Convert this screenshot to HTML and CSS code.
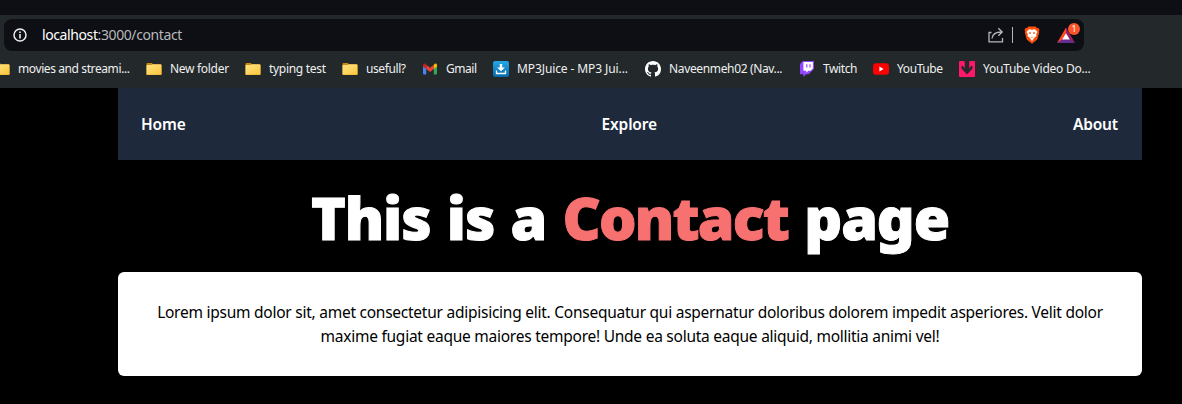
FILE: index.html
```html
<!DOCTYPE html>
<html lang="en">
<head>
<meta charset="utf-8">
<title>Contact</title>
<link rel="stylesheet" href="styles.css">
</head>
<body>
<svg class="defs" width="0" height="0" aria-hidden="true">
  <defs>
    <linearGradient id="fold" x2="1" y2="1"><stop stop-color="#ffe484"/><stop offset="1" stop-color="#fcc63d"/></linearGradient>
    <linearGradient id="blue" x2="0" y2="1"><stop stop-color="#25a9e6"/><stop offset="1" stop-color="#0768ae"/></linearGradient>
    <symbol id="folder" viewBox="0 0 16 16"><path d="M.5 3q0-1 1-1H6l1 1.400h7.500q1 0 1 1V14H.5z" fill="#c98b0d"/><path d="M.5 4.500Q.5 4 1 4h4.500l1.300-.7h7.700q1 0 1 1v8.500q0 .9-.9.900H1.400q-.9 0-.9-.9z" fill="url(#fold)"/></symbol>
  </defs>
</svg>
<header class="browser">
  <div class="tabstrip"></div>
  <div class="address">
    <svg class="info" viewBox="0 0 14 14"><circle cx="7" cy="7" r="6" fill="none" stroke="#eee" stroke-width="1.500"/><path d="M6.200 3.500h1.600V5H6.200zM6.200 6h1.600v4.500H6.200z" fill="#eee"/></svg>
    <div class="url"><span class="host">localhost</span>:3000/contact</div>
    <svg class="share" viewBox="0 0 16 16" fill="none" stroke="#b5b7bb" stroke-width="1.300"><path d="M3.500 5.500H1v9.300h13.500V11M4 11.500C4.500 7 7.500 5 13.500 5M10.300 1.300 14.200 5l-3.900 3.800"/></svg>
    <span class="divider"></span>
    <svg class="brave" viewBox="0 0 16 18"><path d="M4.500.5h7L13 2l1.300-.1L15.500 4l-.6 1.500.3 1-2 7L8 17.700l-5.200-4.200-2-7 .3-1L.5 4l1.200-2.100L3 2z" fill="#fb4f0b"/><path d="M5 3.200l3 .6 3-.6 2.400 2.900-1.300 2.400.3 1.500-2.200 1.700L8 15.200l-2.200-3.500L3.600 10l.3-1.500-1.300-2.400z" fill="#fff"/><path d="M4.500 6.500 6.900 6.200 6.700 8 5 7.400zM11.500 6.500 9.100 6.200 9.300 8 11 7.400zM6.600 10.400l1.400.7 1.400-.7L8 12z" fill="#fb4f0b"/></svg>
    <div class="rewards">
      <svg viewBox="0 0 18 16"><path d="M9 .5 0 16l9-5z" fill="#ff4726"/><path d="M9 .5 18 16l-9-5z" fill="#9e1f63"/><path d="M0 16h18l-9-6z" fill="#662d91"/><path d="M9 6.300 5.200 12.400h7.600z" fill="#fff"/></svg>
      <span class="badge">1</span>
    </div>
  </div>
  <nav class="bookmarks">
    <a class="bm w-movies"><svg><use href="#folder"/></svg><span>movies and streami...</span></a>
    <a class="bm w-new"><svg><use href="#folder"/></svg><span>New folder</span></a>
    <a class="bm w-typing"><svg><use href="#folder"/></svg><span>typing test</span></a>
    <a class="bm w-use"><svg><use href="#folder"/></svg><span>usefull?</span></a>
    <a class="bm w-gmail"><svg viewBox="0 0 16 16"><path d="M1 4.500 4.200 7v6.500H2q-1 0-1-1z" fill="#4285f4"/><path d="M15 4.500 11.800 7v6.500H14q1 0 1-1z" fill="#34a853"/><path d="M4.200 3.700 8 6.700l3.800-3V8L8 11 4.200 8z" fill="#ea4335"/><path d="M1 4q.2-2.300 2.300-1.200l.9.900V8L1 5.500z" fill="#c5221f"/><path d="M15 4q-.2-2.300-2.300-1.200l-.9.900V8L15 5.500z" fill="#fbbc04"/></svg><span>Gmail</span></a>
    <a class="bm w-juice"><svg viewBox="0 0 16 16"><rect width="16" height="16" rx="2" fill="url(#blue)"/><path d="M6.800 3h2.400v3.500H12L8 10.300 4 6.500h2.800z" fill="#fff"/><path d="M3.500 9.500v3h9v-3" fill="none" stroke="#fff" stroke-width="1.300"/></svg><span>MP3Juice - MP3 Jui...</span></a>
    <a class="bm w-git"><svg viewBox="0 0 16 16"><path fill="#fff" d="M8 0C3.580 0 0 3.580 0 8c0 3.540 2.290 6.530 5.470 7.590.4.070.55-.17.55-.38 0-.19-.01-.82-.01-1.490-2.010.37-2.530-.49-2.690-.94-.09-.23-.48-.94-.82-1.130-.28-.15-.68-.52-.01-.53.63-.01 1.080.58 1.230.82.72 1.210 1.870.87 2.330.66.07-.52.28-.87.51-1.070-1.780-.2-3.640-.89-3.640-3.950 0-.87.31-1.590.82-2.150-.08-.2-.36-1.020.08-2.120 0 0 .67-.21 2.200.82.64-.18 1.320-.27 2-.27s1.360.09 2 .27c1.530-1.040 2.200-.82 2.200-.82.44 1.100.16 1.920.08 2.120.51.56.82 1.270.82 2.150 0 3.070-1.870 3.750-3.650 3.950.29.25.54.73.54 1.480 0 1.070-.01 1.930-.01 2.200 0 .21.15.46.55.38A8.010 8.010 0 0 0 16 8c0-4.420-3.580-8-8-8z"/></svg><span>Naveenmeh02 (Nav...</span></a>
    <a class="bm w-twitch"><svg viewBox="0 0 16 16"><path d="M3.800 0 1 2.900v10.300h3.400V16l2.900-2.800h2.300L15 8V0z" fill="#9146ff"/><path d="M4.400 1.100h9.500v6.400l-2.300 2.300H9.300l-2 2v-2H4.400z" fill="#fff"/><path d="M7.200 3.200h1.200v3.400H7.200zm3.200 0h1.200v3.400h-1.200z" fill="#9146ff"/></svg><span>Twitch</span></a>
    <a class="bm w-yt"><svg viewBox="0 0 16 16"><rect y="2.300" width="16" height="11.500" rx="3" fill="#f00"/><path d="m6.400 5.600 4.200 2.400-4.200 2.400z" fill="#fff"/></svg><span>YouTube</span></a>
    <a class="bm w-dl"><svg viewBox="0 0 16 16"><rect width="16" height="16" rx="1" fill="#ff1768"/><path d="M5 0h6l-.8 1v6.500L12 5h1.500v2.500L8 13.500 2.500 7.500V5H4l1.800 2.500V1z" fill="#26282c"/></svg><span>YouTube Video Do...</span></a>
  </nav>
</header>
<main class="page">
  <nav class="menu"><a>Home</a><a class="explore">Explore</a><a>About</a></nav>
  <h1 class="title">This is a <span class="accent">Contact</span> page</h1>
  <p class="card"><span class="line one">Lorem ipsum dolor sit, amet consectetur adipisicing elit. Consequatur qui aspernatur doloribus dolorem impedit asperiores. Velit dolor</span> <span class="line two">maxime fugiat eaque maiores tempore! Unde ea soluta eaque aliquid, mollitia animi vel!</span></p>
</main>
</body>
</html>
```
FILE: styles.css
```css
* { box-sizing: border-box; }
body { margin: 0; height: 404px; overflow: hidden; background: #000; color: #fff; font-family: "Noto Sans", "Open Sans", sans-serif; }
.defs { position: absolute; }
.browser { height: 88px; background: #23282b; overflow: hidden; }
.tabstrip { height: 15px; background: #0e0f14; }
.address { display: flex; align-items: center; width: 1080px; height: 32px; margin: 4px 0 0 4px; padding: 0 0 0 9px; border-radius: 8px; background: #0e0f14; }
.info { width: 14px; height: 14px; }
.url { flex: 1; margin-left: 15px; font-size: 14px; line-height: 20px; letter-spacing: -.4px; color: #b6b8bd; }
.host { color: #fff; }
.share { width: 16px; height: 16px; }
.divider { width: 1px; height: 16px; margin: 0 11px 0 8px; background: #b5b7bb; }
.brave { width: 16px; height: 18px; margin-right: 17px; }
.rewards { position: relative; width: 18px; height: 16px; margin-right: 9px; }
.rewards svg { display: block; width: 18px; height: 16px; }
.badge { position: absolute; left: 11px; top: -4px; width: 12px; height: 12px; border-radius: 6px; background: #fb542b; font-size: 9px; line-height: 12px; text-align: center; }
.bookmarks { display: flex; height: 36px; align-items: center; margin-left: -6px; color: #f0f0f0; font-size: 12px; }
.bm { display: flex; flex: none; align-items: center; gap: 8px; white-space: nowrap; }
.bm svg { flex: none; width: 16px; height: 16px; }
.bm span { line-height: 18px; }
.w-movies { width: 152px; letter-spacing: -.4px; }
.w-new { width: 99px; letter-spacing: -.3px; }
.w-typing { width: 97px; letter-spacing: -.3px; }
.w-use { width: 80px; letter-spacing: -.4px; }
.w-gmail { width: 71px; letter-spacing: -.45px; }
.w-juice { width: 152px; letter-spacing: -.1px; }
.w-git { width: 154px; letter-spacing: -.35px; }
.w-twitch { width: 74px; letter-spacing: -.4px; }
.w-yt { width: 86px; letter-spacing: -.4px; }
.w-dl { letter-spacing: -.25px; }
.page { width: 1024px; margin-left: 118px; }
.menu { display: flex; justify-content: space-between; padding: 24px 24px 24px 23px; height: 72px; background: #1e293b; font-size: 15.5px; line-height: 24px; font-weight: 600; letter-spacing: -.15px; }
.title { margin: 27px 0 25px; height: 60px; font-size: 59px; line-height: 60px; font-weight: 900; letter-spacing: -1.1px; word-spacing: 2px; text-align: center; white-space: nowrap; -webkit-text-stroke: 1px currentColor; }
.accent { color: #f87171; letter-spacing: -1.8px; }
.card { margin: 0; height: 104px; padding: 28px 24px; border-radius: 6px; background: #fff; color: #000; font-size: 15.5px; line-height: 24px; text-align: center; }
.line { display: block; white-space: nowrap; }
.one { letter-spacing: -.25px; }
.two { letter-spacing: -.25px; }
```
